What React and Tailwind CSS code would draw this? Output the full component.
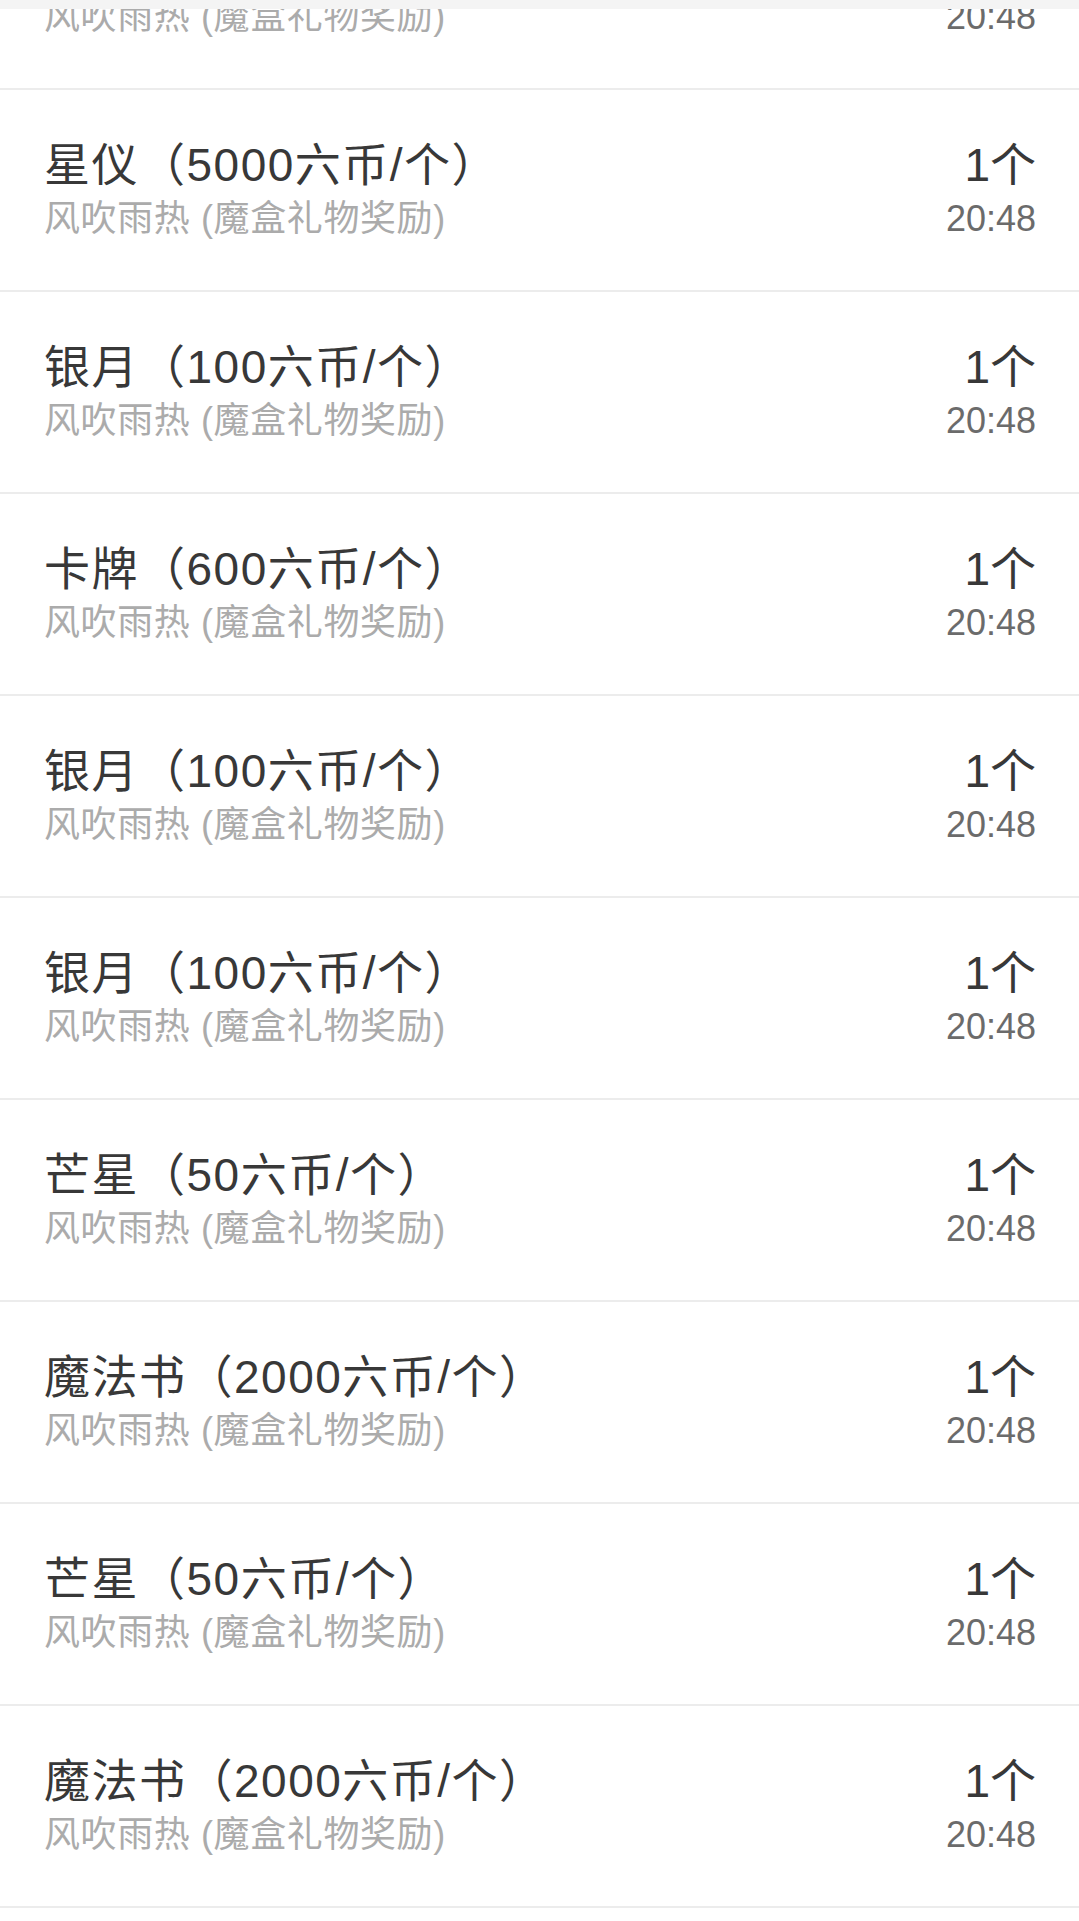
import React from 'react';

const records = [
  { name: '银月（100六币/个）' },
  { name: '星仪（5000六币/个）' },
  { name: '银月（100六币/个）' },
  { name: '卡牌（600六币/个）' },
  { name: '银月（100六币/个）' },
  { name: '银月（100六币/个）' },
  { name: '芒星（50六币/个）' },
  { name: '魔法书（2000六币/个）' },
  { name: '芒星（50六币/个）' },
  { name: '魔法书（2000六币/个）' },
];

const RecordRow = ({ name }) => (
  <div className="h-[202px] flex items-center justify-between pl-[44px] pr-[43px] pt-[4px] border-b-2 border-[#ececec]">
    <div className="flex flex-col">
      <p className="text-[46px] leading-[54px] tracking-[1.5px] text-[#383838]">{name}</p>
      <p className="text-[36px] leading-[54px] tracking-[0.6px] text-[#ababab]">风吹雨热 (魔盒礼物奖励)</p>
    </div>
    <div className="flex flex-col items-end">
      <p className="text-[46px] leading-[54px] text-[#383838]">1个</p>
      <p className="text-[36px] leading-[54px] text-[#6b6b6b]">20:48</p>
    </div>
  </div>
);

const App = () => {
  return (
    <div
      className="relative h-[1921px] overflow-hidden bg-white"
      style={{ fontFamily: '"Liberation Sans", "Noto Sans CJK SC", sans-serif' }}
    >
      {/* header shadow strip over the list */}
      <div className="absolute top-0 inset-x-0 h-[9px] bg-[#f4f4f4] z-10" />

      <div className="-mt-[112px]">
        {records.map((r, i) => (
          <RecordRow key={i} name={r.name} />
        ))}
      </div>
    </div>
  );
};

export default App;
